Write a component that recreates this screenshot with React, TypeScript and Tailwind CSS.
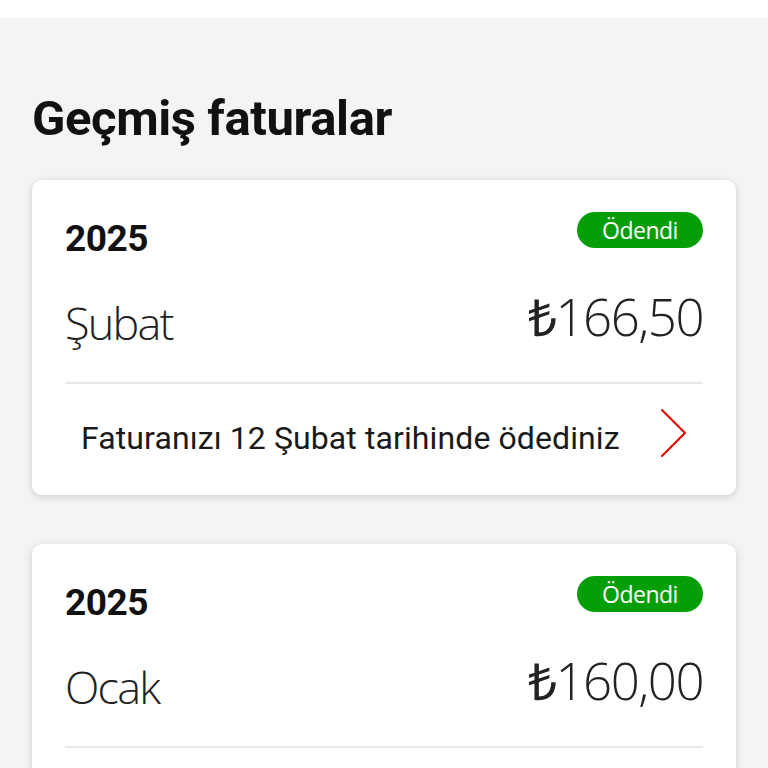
import React from "react";

type Bill = { year: string; month: string; amount: string; note?: string };

const bills: Bill[] = [
  { year: "2025", month: "Şubat", amount: "₺166,50", note: "Faturanızı 12 Şubat tarihinde ödediniz" },
  { year: "2025", month: "Ocak", amount: "₺160,00", note: "Faturanızı 12 Ocak tarihinde ödediniz" },
];

function Chevron() {
  return (
    <svg width="28" height="50" viewBox="0 0 28 50" fill="none" className="shrink-0">
      <path d="M3 2 L26 25 L3 48" stroke="#e60000" strokeWidth="2" strokeLinecap="round" strokeLinejoin="round" />
    </svg>
  );
}

function BillCard({ bill }: { bill: Bill }) {
  return (
    <div className="bg-white rounded-[10px] shadow-[0_2px_8px_rgba(0,0,0,0.16)] px-[33px] pt-[32px] pb-[37px]">
      <div className="flex items-start justify-between h-[48px]">
        <div className="font-['Roboto'] font-bold text-[37px] leading-none text-[#111] mt-[8px] tracking-[-0.5px]">{bill.year}</div>
        <div className="bg-[#069e06] text-white rounded-full h-[36px] w-[126px] flex items-center justify-center font-['Open_Sans'] text-[23px] leading-none tracking-[-0.5px]">
          Ödendi
        </div>
      </div>
      <div className="flex items-end justify-between mt-[24px] h-[70px] pb-[10px]">
        <div className="font-['Open_Sans'] font-light text-[45px] leading-none text-[#222] tracking-[-1.8px] mb-[-1px]">{bill.month}</div>
        <div className="font-['Open_Sans'] font-light text-[51px] leading-none text-[#222] tracking-[-1.5px] mb-[2px]">{bill.amount}</div>
      </div>
      <div className="h-[2px] bg-[#e8e8e8] mt-[28px]" />
      <div className="flex items-center justify-between pl-[16px] pr-[16px] mt-[24px] h-[50px]">
        <div className="font-['Roboto'] text-[32px] leading-none text-[#1a1a1a] mt-[10px] tracking-[0.1px] whitespace-nowrap">{bill.note}</div>
        <Chevron />
      </div>
    </div>
  );
}

export default function App() {
  return (
    <div className="w-[768px] h-[768px] overflow-hidden bg-[#f4f4f4] flex flex-col">
      <div className="h-[18px] bg-white shrink-0" />
      <div className="px-[32px] pt-[76px]">
        <h1 className="font-['Roboto'] font-bold text-[49px] leading-none text-[#111] tracking-[-0.4px]">Geçmiş faturalar</h1>
        <div className="flex flex-col gap-[49px] mt-[37px]">
          {bills.map((b, i) => (
            <BillCard key={i} bill={b} />
          ))}
        </div>
      </div>
    </div>
  );
}
